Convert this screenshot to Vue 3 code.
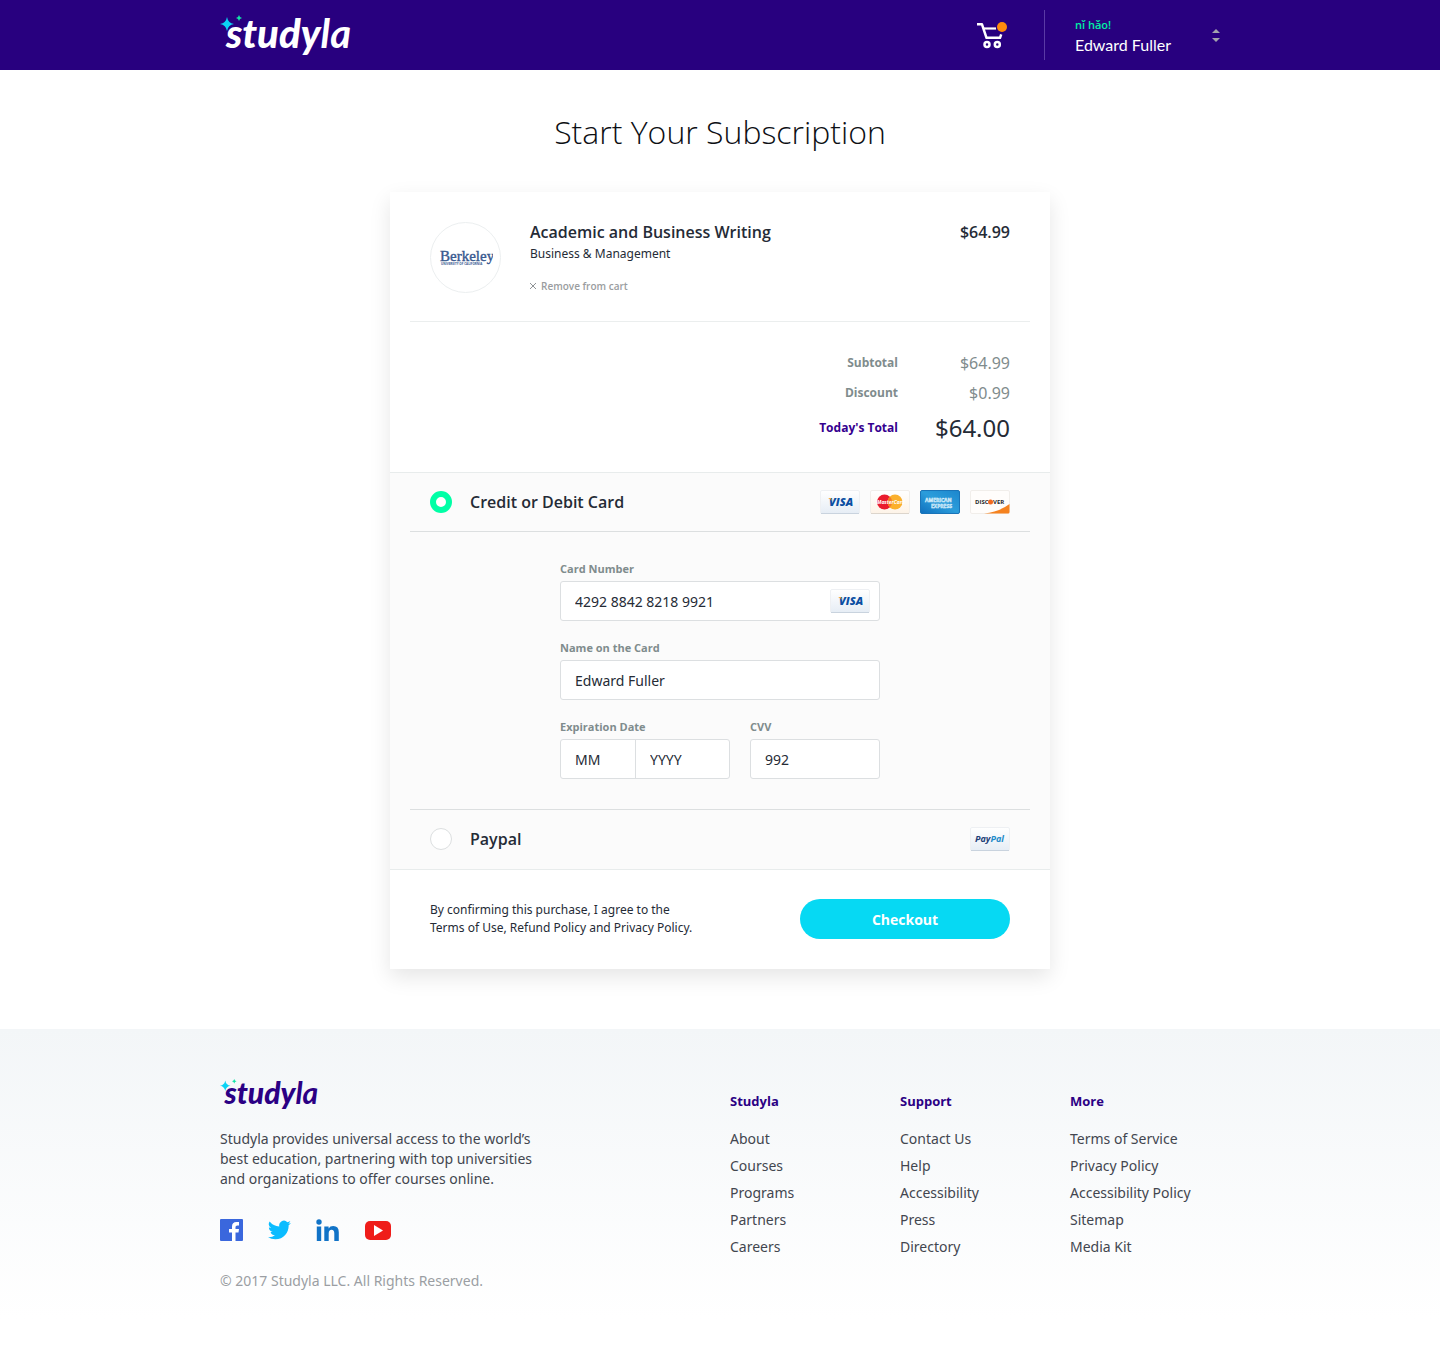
<script setup>
import { ref } from 'vue'

const method = ref('card')
const cardNumber = ref('4292 8842 8218 9921')
const cardName = ref('Edward Fuller')
const month = ref('')
const year = ref('')
const cvv = ref('992')

const totals = [
  { label: 'Subtotal', value: '$64.99' },
  { label: 'Discount', value: '$0.99' },
  { label: "Today's Total", value: '$64.00', grand: true }
]

const columns = [
  { title: 'Studyla', links: ['About', 'Courses', 'Programs', 'Partners', 'Careers'] },
  { title: 'Support', links: ['Contact Us', 'Help', 'Accessibility', 'Press', 'Directory'] },
  { title: 'More', links: ['Terms of Service', 'Privacy Policy', 'Accessibility Policy', 'Sitemap', 'Media Kit'] }
]
</script>

<template>
  <div class="page">
    <svg class="defs" width="0" height="0" aria-hidden="true">
      <defs>
        <linearGradient id="paper-blue" x1="0" y1="0" x2="0" y2="1">
          <stop offset="0" stop-color="#ffffff" /><stop offset="1" stop-color="#e6edf5" />
        </linearGradient>
        <linearGradient id="paper-warm" x1="0" y1="0" x2="0" y2="1">
          <stop offset="0" stop-color="#ffffff" /><stop offset="1" stop-color="#fdf3e7" />
        </linearGradient>
        <linearGradient id="amex-blue" x1="0" y1="1" x2="1" y2="0">
          <stop offset="0" stop-color="#0f6fbd" /><stop offset="0.5" stop-color="#2b9ddb" /><stop offset="1" stop-color="#1c86cd" />
        </linearGradient>
        <symbol id="visa" viewBox="0 0 40 24">
          <rect x="0.5" y="0.5" width="39" height="23" rx="1.5" fill="url(#paper-blue)" stroke="#eef0f3" />
          <path d="M1 23.5h38" stroke="#c9d3de" />
          <text x="9" y="16" class="mark" font-size="11" font-weight="800" font-style="italic" fill="#0b4ea2">VISA</text>
          <path d="M8 8h3l1 3q-1-2-4-3z" fill="#f7a823" />
        </symbol>
        <symbol id="mastercard" viewBox="0 0 40 24">
          <rect x="0.5" y="0.5" width="39" height="23" rx="1.5" fill="url(#paper-warm)" stroke="#f1eeea" />
          <path d="M1 23.5h38" stroke="#dcd5cc" />
          <circle cx="14.500" cy="12" r="7.500" fill="#ea1c2d" />
          <circle cx="25" cy="12" r="7.500" fill="#fbb02c" />
          <path d="M19.800 6.600a7.500 7.500 0 0 1 0 10.800a7.500 7.500 0 0 1 0-10.800z" fill="#f47a25" />
          <text x="7" y="14" class="mark" font-size="5" font-weight="700" font-style="italic" fill="#fff">MasterCard</text>
        </symbol>
        <symbol id="amex" viewBox="0 0 40 24">
          <rect x="0.5" y="0.5" width="39" height="23" rx="1.5" fill="url(#amex-blue)" stroke="#1a74b8" />
          <text x="5" y="12" class="mark" font-size="5" font-weight="700" fill="#7cc4ea" stroke="#e8f6fd" stroke-width="0.4">AMERICAN</text>
          <text x="11" y="18" class="mark" font-size="5" font-weight="700" fill="#7cc4ea" stroke="#e8f6fd" stroke-width="0.4">EXPRESS</text>
        </symbol>
        <symbol id="discover" viewBox="0 0 40 24">
          <rect x="0.500" y="0.500" width="39" height="23" rx="1.500" fill="#fffdfb" stroke="#f1eeea" />
          <path d="M14 23.500q16-2 25.500-9.500v8q0 1.500-1.500 1.500z" fill="#f5821f" />
          <text x="5" y="14" class="mark" font-size="6" font-weight="700" fill="#2a2a2c">DISC</text>
          <circle cx="20.500" cy="12" r="2.500" fill="#f26a21" />
          <text x="23" y="14" class="mark" font-size="6" font-weight="700" fill="#2a2a2c">VER</text>
        </symbol>
        <symbol id="paypal" viewBox="0 0 40 24">
          <rect x="0.5" y="0.5" width="39" height="23" rx="1.5" fill="url(#paper-blue)" stroke="#eef0f3" />
          <path d="M1 23.500h38" stroke="#c9d3de" />
          <text x="5" y="15" class="mark" font-size="9" font-weight="700" font-style="italic" fill="#1e3f77">Pay<tspan fill="#1e8bc9">Pal</tspan></text>
        </symbol>
        <symbol id="wordmark" viewBox="0 0 132 40">
          <path d="M7 2q1 6 7 7q-6 1-7 7q-1-6-7-7q6-1 7-7z" fill="#0bd3f5" />
          <path d="M19 0q.5 2.500 3 3q-2.500.5-3 3q-.5-2.500-3-3q2.500-.5 3-3z" fill="#12e3a8" />
          <text x="6" y="33" class="logo-text" font-size="40" fill="currentColor"><tspan font-weight="900">study</tspan><tspan font-weight="700">la</tspan></text>
        </symbol>
      </defs>
    </svg>

    <header class="topbar">
      <div class="container bar">
        <a href="#" class="brand" aria-label="Studyla"><svg width="132" height="40"><use href="#wordmark" /></svg></a>
        <a href="#" class="cart" aria-label="Cart">
          <svg width="32" height="30" viewBox="0 0 32 30" fill="none" stroke="#fff" stroke-width="2.500">
            <path d="M1 4.300h5l4.500 13.500h13.500l1.200-3.500" stroke-linejoin="round" />
            <path d="M8 8.500h12" stroke-width="2.200" />
            <circle cx="11" cy="24.500" r="2.500" />
            <circle cx="21.300" cy="24.500" r="2.500" />
            <circle cx="26" cy="7" r="5" fill="#ff8a0c" stroke="none" />
          </svg>
        </a>
        <button type="button" class="user">
          <span class="who"><span class="hello">nǐ hǎo!</span><span class="name">Edward Fuller</span></span>
          <svg width="8" height="14" viewBox="0 0 8 14" fill="#a3a3ad"><path d="M0 5l4-4 4 4zM0 10h8l-4 4z" /></svg>
        </button>
      </div>
    </header>

    <main>
      <h1>Start Your Subscription</h1>
      <form class="card" @submit.prevent>
        <section class="item">
          <div class="school">
            <svg width="54" height="20" viewBox="0 0 54 20" role="img" aria-label="Berkeley, University of California">
              <text x="1" y="13" font-family="Liberation Serif, serif" font-size="15" fill="#38598f" stroke="#38598f" stroke-width="0.4">Berkeley</text>
              <text x="2" y="17" class="mark" font-size="3" font-weight="700" fill="#38598f">UNIVERSITY OF CALIFORNIA</text>
            </svg>
          </div>
          <div class="course">
            <h2>Academic and Business Writing</h2>
            <p>Business &amp; Management</p>
            <button type="button" class="remove">
              <svg width="6" height="6" viewBox="0 0 6 6" stroke="#8f9396" fill="none"><path d="M0 0l6 6M6 0l-6 6" /></svg>
              Remove from cart
            </button>
          </div>
          <span class="price">$64.99</span>
        </section>

        <dl class="totals">
          <div v-for="t in totals" :key="t.label" :class="{ grand: t.grand }">
            <dt>{{ t.label }}</dt>
            <dd>{{ t.value }}</dd>
          </div>
        </dl>

        <section class="payment">
          <div class="method">
            <label><input v-model="method" type="radio" name="method" value="card" />Credit or Debit Card</label>
            <div class="marks">
              <svg width="40" height="24"><use href="#visa" /></svg>
              <svg width="40" height="24"><use href="#mastercard" /></svg>
              <svg width="40" height="24"><use href="#amex" /></svg>
              <svg width="40" height="24"><use href="#discover" /></svg>
            </div>
          </div>

          <div class="details">
            <div class="fields">
              <div class="field">
                <label for="number">Card Number</label>
                <div class="box">
                  <input id="number" v-model="cardNumber" type="text" inputmode="numeric" />
                  <svg width="40" height="24"><use href="#visa" /></svg>
                </div>
              </div>
              <div class="field">
                <label for="holder">Name on the Card</label>
                <div class="box"><input id="holder" v-model="cardName" type="text" /></div>
              </div>
              <div class="pair">
                <div class="field">
                  <label for="month">Expiration Date</label>
                  <div class="box">
                    <input id="month" v-model="month" class="month" type="text" placeholder="MM" />
                    <input v-model="year" class="year" type="text" placeholder="YYYY" aria-label="Expiration year" />
                  </div>
                </div>
                <div class="field">
                  <label for="cvv">CVV</label>
                  <div class="box"><input id="cvv" v-model="cvv" type="text" inputmode="numeric" /></div>
                </div>
              </div>
            </div>
          </div>

          <div class="method last">
            <label><input v-model="method" type="radio" name="method" value="paypal" />Paypal</label>
            <svg width="40" height="24"><use href="#paypal" /></svg>
          </div>
        </section>

        <div class="confirm">
          <p>By confirming this purchase, I agree to the<br />Terms of Use, Refund Policy and Privacy Policy.</p>
          <button type="submit" class="checkout">Checkout</button>
        </div>
      </form>
    </main>

    <footer>
      <div class="container foot">
        <div class="about">
          <a href="#" class="brand dark" aria-label="Studyla"><svg width="99" height="30"><use href="#wordmark" /></svg></a>
          <p>Studyla provides universal access to the world’s<br />best education, partnering with top universities<br />and organizations to offer courses online.</p>
          <div class="social">
            <a href="#" aria-label="Facebook"><svg width="23" height="22" viewBox="0 0 23 22"><rect width="23" height="22" rx="1" fill="#3a67dd" /><path d="M12 22v-8.500H9V10h3V7.500Q12 3 16.500 3H19v3.500h-1.700Q15.500 6.500 15.500 8v2H19l-.5 3.500h-3V22z" fill="#fff" /></svg></a>
            <a href="#" aria-label="Twitter"><svg width="23" height="22" viewBox="0 1 24 22"><path d="M23.950 4.570a10 10 0 0 1-2.820.77 4.960 4.960 0 0 0 2.160-2.720c-.95.550-2 .95-3.130 1.180a4.920 4.920 0 0 0-8.380 4.480A13.930 13.930 0 0 1 1.640 3.160a4.920 4.920 0 0 0 1.520 6.570 4.900 4.900 0 0 1-2.230-.61v.06a4.920 4.920 0 0 0 3.950 4.830 5 5 0 0 1-2.210.08 4.940 4.940 0 0 0 4.600 3.420A9.870 9.870 0 0 1 0 19.540a13.990 13.990 0 0 0 7.550 2.210c9.050 0 14-7.500 14-13.980 0-.21 0-.42-.02-.63a9.940 9.940 0 0 0 2.420-2.570z" fill="#0bbcff" /></svg></a>
            <a href="#" aria-label="LinkedIn"><svg width="23" height="22" viewBox="0 0 23 22" fill="#1173c7"><circle cx="3" cy="3" r="2.700" /><path d="M.8 7.500h4.400V22H.8zM8.300 7.500h4.300v2Q14 7.100 17.200 7.100q5.600 0 5.600 6.200V22h-4.500v-7.500q0-3.700-2.700-3.700-2.900 0-2.900 3.700V22H8.300z" /></svg></a>
            <a href="#" aria-label="YouTube"><svg width="28" height="22" viewBox="0 0 28 22"><rect x="1" y="2" width="26" height="19" rx="5" fill="#ef1d1a" /><path d="M10 6l9 5.500L10 17z" fill="#fff" /></svg></a>
          </div>
          <small>© 2017 Studyla LLC. All Rights Reserved.</small>
        </div>
        <nav v-for="c in columns" :key="c.title">
          <h3>{{ c.title }}</h3>
          <a v-for="l in c.links" :key="l" href="#">{{ l }}</a>
        </nav>
      </div>
    </footer>
  </div>
</template>

<style>
body {
  margin: 0;
}
</style>

<style scoped>
.page {
  font-family: "Noto Sans", "Open Sans", sans-serif;
  font-size: 14px;
  line-height: 20px;
  color: #252b36;
  background: #fff;
}
.page *,
.page {
  box-sizing: border-box;
}
h1, h2, h3, label, dt, .price, .mark, .hello, .remove, .checkout {
  font-family: "Open Sans", "Noto Sans", sans-serif;
}
h1, h2, h3, p, dl, dd {
  margin: 0;
}
a {
  text-decoration: none;
  color: inherit;
}
button {
  border: 0;
  background: none;
  padding: 0;
  cursor: pointer;
}
svg {
  display: block;
  flex: none;
}
.defs {
  position: absolute;
}
.logo-text {
  font-family: Lato, sans-serif;
  font-style: italic;
}
.container {
  max-width: 1000px;
  margin: 0 auto;
}

.topbar {
  background: #28007f;
  color: #fff;
}
.bar {
  height: 70px;
  display: flex;
  align-items: center;
}
.brand {
  color: #fff;
}
.brand.dark {
  color: #2b0084;
}
.cart {
  margin-left: auto;
  margin-right: 36px;
}
.user {
  width: 176px;
  height: 50px;
  border-left: 1px solid #5a3aa5;
  padding-left: 30px;
  display: flex;
  align-items: center;
  justify-content: space-between;
  text-align: left;
  color: #fff;
}
.who {
  display: flex;
  flex-direction: column;
}
.hello {
  font-size: 11px;
  line-height: 20px;
  font-weight: 600;
  color: #00f0a5;
}
.name {
  font-family: Lato, sans-serif;
  font-size: 16px;
  line-height: 20px;
}

h1 {
  padding: 42px 0 40px;
  font-size: 32px;
  line-height: 40px;
  font-weight: 300;
  color: #0d0f14;
  text-align: center;
}
.card {
  max-width: 660px;
  margin: 0 auto 60px;
  background: #fff;
  box-shadow: 0 8px 20px rgba(0, 0, 0, 0.1);
}
.item {
  margin: 0 20px;
  padding: 30px 20px 25px;
  display: flex;
  border-bottom: 1px solid #ebeeee;
}
.school {
  width: 71px;
  height: 71px;
  margin-right: 29px;
  border: 1px solid #eceff0;
  border-radius: 50%;
  display: flex;
  align-items: center;
  justify-content: center;
}
.course {
  flex: 1;
}
h2,
.price {
  font-size: 16px;
  line-height: 20px;
  font-weight: 600;
}
.course p {
  margin-top: 2px;
  font-size: 12px;
}
.remove {
  margin-top: 12px;
  display: flex;
  align-items: center;
  gap: 5px;
  font-size: 10px;
  line-height: 20px;
  font-weight: 600;
  color: #9a9da0;
}
.totals {
  padding: 26px 40px 24px;
}
.totals div {
  height: 30px;
  display: flex;
  align-items: center;
  justify-content: flex-end;
  color: #7f8c8d;
}
.totals dt {
  font-size: 12px;
  font-weight: 700;
}
.totals dd {
  width: 112px;
  text-align: right;
  font-size: 16px;
}
.totals .grand {
  height: 40px;
  color: #35008f;
}
.grand dd {
  font-size: 24px;
  color: #252b36;
}
.payment {
  background: #fbfbfb;
  border-top: 1px solid #e8ecec;
  border-bottom: 1px solid #e8ecec;
}
.method {
  margin: 0 20px;
  padding: 0 20px;
  height: 59px;
  display: flex;
  align-items: center;
  justify-content: space-between;
  border-bottom: 1px solid #dcdfe0;
}
.method.last {
  border-color: transparent;
}
.method label {
  display: flex;
  align-items: center;
  gap: 18px;
  font-size: 16px;
  font-weight: 600;
}
.method input {
  appearance: none;
  width: 22px;
  height: 22px;
  margin: 0;
  border: 1px solid #dcdfe0;
  border-radius: 50%;
  background: #fff;
}
.method input:checked {
  border: 6px solid #00ffa6;
}
.marks {
  display: flex;
  gap: 10px;
}
.details {
  margin: 0 20px;
  padding: 29px 20px 30px;
  border-bottom: 1px solid #dcdfe0;
}
.fields {
  max-width: 320px;
  margin: 0 auto;
  display: flex;
  flex-direction: column;
  gap: 19px;
}
.field {
  min-width: 0;
  display: flex;
  flex-direction: column;
  gap: 4px;
}
.field label {
  font-size: 11px;
  line-height: 16px;
  font-weight: 700;
  color: #7f8c8d;
}
.box {
  height: 40px;
  display: flex;
  align-items: center;
  background: #fff;
  border: 1px solid #dcdfe1;
  border-radius: 3px;
}
.box svg {
  margin-right: 9px;
}
.box input {
  flex: 1;
  width: 100%;
  min-width: 0;
  height: 38px;
  padding: 0 14px;
  border: 0;
  outline: 0;
  background: none;
  font-family: inherit;
  font-size: 14px;
  color: #252b36;
}
.box input::placeholder {
  color: #252b36;
  opacity: 1;
}
.box .month {
  flex: 0 0 75px;
  border-right: 1px solid #dcdfe1;
}
.pair {
  display: grid;
  grid-template-columns: 17fr 13fr;
  gap: 20px;
}
.confirm {
  padding: 29px 40px 30px;
  display: flex;
  align-items: center;
  justify-content: space-between;
}
.confirm p {
  font-size: 12px;
  line-height: 18px;
}
.checkout {
  width: 210px;
  height: 40px;
  border-radius: 20px;
  background: #06d9f3;
  color: #fff;
  font-size: 14px;
  font-weight: 700;
}

footer {
  background: linear-gradient(#f3f6f8, #fff 90%);
  color: #42464f;
}
.foot {
  display: flex;
  padding: 50px 0 60px;
}
.about {
  flex: 1;
  display: flex;
  flex-direction: column;
}
.about p {
  margin-top: 20px;
}
.social {
  display: flex;
  gap: 25px;
  margin: 30px 0;
}
small {
  font-size: 14px;
  color: #9b9ea3;
}
nav {
  width: 170px;
  display: flex;
  flex-direction: column;
  line-height: 27px;
}
nav:last-child {
  width: 150px;
}
h3 {
  margin: 12px 0 14px;
  font-size: 13px;
  line-height: 20px;
  font-weight: 700;
  color: #2b0084;
}
</style>
